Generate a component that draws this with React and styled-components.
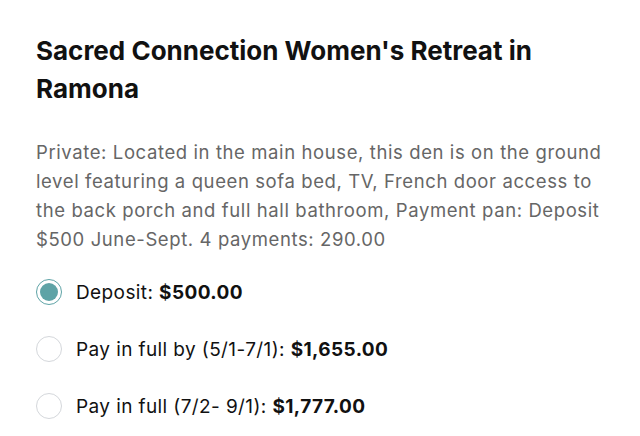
import React from 'react';
import styled, { createGlobalStyle } from 'styled-components';

const GlobalStyle = createGlobalStyle`
  body {
    margin: 0;
    background: #ffffff;
    font-family: 'Inter', 'Noto Sans', sans-serif;
  }
`;

const Container = styled.div`
  display: flex;
  flex-direction: column;
  padding: 32px 36px 0 36px;
  width: 640px;
  box-sizing: border-box;
`;

const Title = styled.h1`
  margin: 0;
  color: #111111;
  font-size: 26px;
  line-height: 38px;
  font-weight: 700;
`;

const Description = styled.p`
  margin: 30px 0 0 0;
  color: #666666;
  font-size: 18.5px;
  line-height: 29px;
  letter-spacing: 0.6px;
`;

const Options = styled.div`
  display: flex;
  flex-direction: column;
  gap: 31px;
  margin-top: 25px;
`;

const OptionRow = styled.label`
  display: flex;
  flex-direction: row;
  align-items: center;
  gap: 14px;
  color: #111111;
  font-size: 19px;
  letter-spacing: 0.4px;
  cursor: pointer;
`;

const Radio = styled.span`
  display: flex;
  justify-content: center;
  align-items: center;
  width: 26px;
  height: 26px;
  box-sizing: border-box;
  border-radius: 50%;
  border: 1px solid ${(p) => (p.checked ? '#5ea3a6' : '#d4d7db')};

  &::after {
    content: '';
    display: ${(p) => (p.checked ? 'block' : 'none')};
    width: 18px;
    height: 18px;
    border-radius: 50%;
    background: #5ea3a6;
  }
`;

const Amount = styled.strong`
  font-weight: 700;
`;

const options = [
  { label: 'Deposit: ', amount: '$500.00', checked: true },
  { label: 'Pay in full by (5/1-7/1): ', amount: '$1,655.00' },
  { label: 'Pay in full (7/2- 9/1): ', amount: '$1,777.00' },
];

function App() {
  return (
    <>
      <GlobalStyle />
      <Container>
        <Title>Sacred Connection Women's Retreat in Ramona</Title>
        <Description>
          Private: Located in the main house, this den is on the ground level featuring a queen sofa bed, TV, French door access to the back porch and full hall bathroom, Payment pan: Deposit $500 June-Sept. 4 payments: 290.00
        </Description>
        <Options>
          {options.map((o) => (
            <OptionRow key={o.label}>
              <Radio checked={o.checked} />
              <span>
                {o.label}
                <Amount>{o.amount}</Amount>
              </span>
            </OptionRow>
          ))}
        </Options>
      </Container>
    </>
  );
}

export default App;
